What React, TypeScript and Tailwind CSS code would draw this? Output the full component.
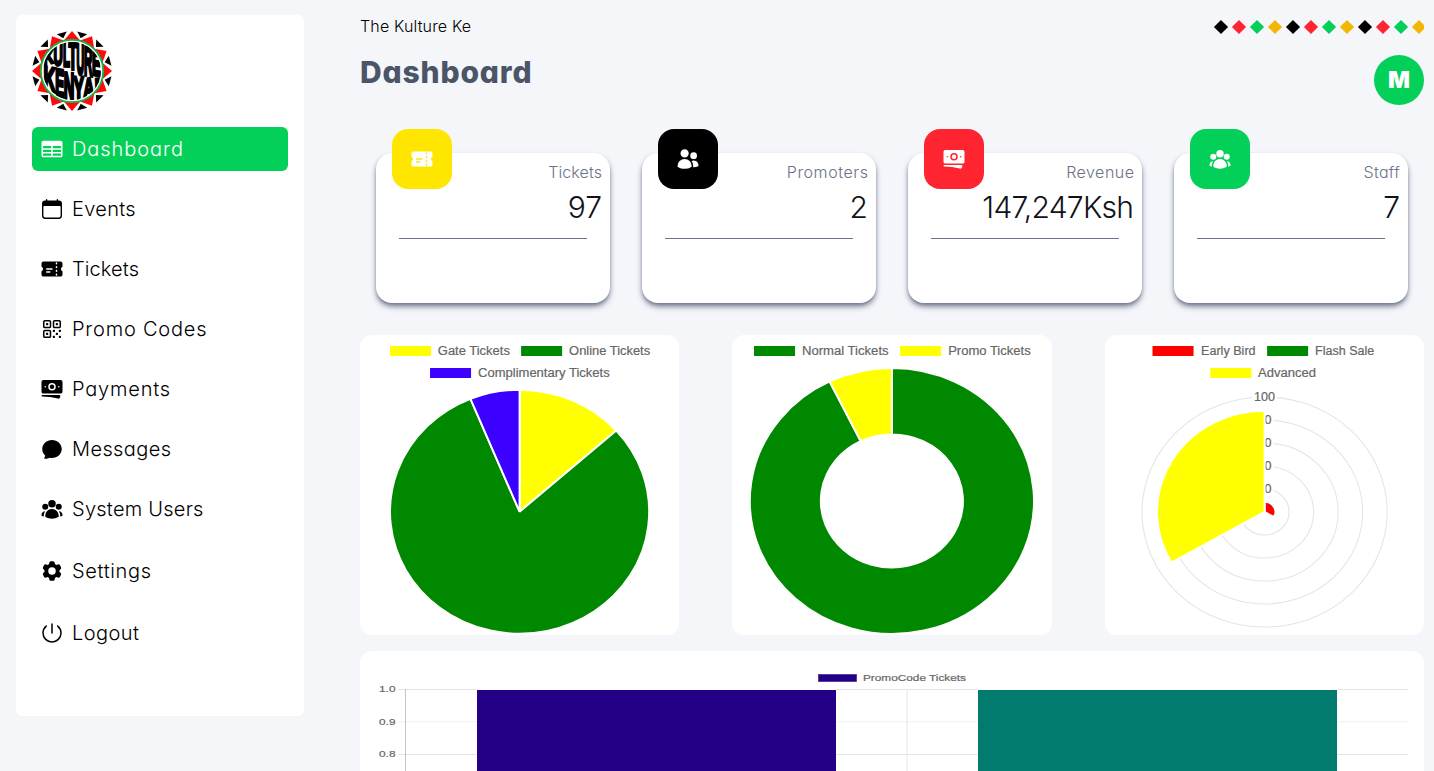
import type { ReactNode } from "react";
import {
  HiTableCells,
  HiTicket,
  HiQrCode,
  HiBanknotes,
  HiUserGroup,
  HiUsers,
  HiCog6Tooth,
  HiChatBubbleOvalLeft,
} from "react-icons/hi2";
import { IoPowerOutline } from "react-icons/io5";

const letters = [
  // glyph, advance, left, right, top, bottom, skew
  ["K", 7.22, 11.5, 22, 19, 33.6, -16],
  ["U", 7.22, 21.6, 31, 12.5, 34.2, -8],
  ["L", 6.11, 31, 38, 10.8, 35.2, 2],
  ["T", 6.11, 36.6, 45.2, 10.6, 38.2, 2],
  ["U", 7.22, 44.4, 52.2, 11.2, 42.8, 6],
  ["R", 7.22, 52, 60.4, 14.4, 44.2, 10],
  ["E", 6.67, 60, 69, 20.5, 44.4, 10],
  ["K", 7.22, 11.5, 23.4, 36, 60, 12],
  ["E", 6.67, 23.2, 32.2, 38.6, 66, 12],
  ["N", 7.22, 31.8, 42.4, 41.8, 69, 6],
  ["Y", 6.67, 41.6, 52, 45.6, 69.2, 0],
  ["A", 7.22, 51.2, 62.2, 47, 66.4, -8],
  ["!", 3.33, 61.8, 69, 47, 60, -8],
] as const;

function Logo() {
  const pt = (r: number, deg: number) => {
    const a = (deg * Math.PI) / 180;
    return `${(40 + r * Math.sin(a)).toFixed(2)},${(40 - r * Math.cos(a)).toFixed(2)}`;
  };
  const steps = Array.from({ length: 12 }, (_, i) => i * 30);
  return (
    <svg viewBox="0 0 80 80" className="block size-20">
      <clipPath id="logo-disc">
        <circle cx="40" cy="40" r="29" />
      </clipPath>
      {steps.map((d) => (
        <g key={d}>
          <polygon points={`${pt(40, d)} ${pt(31.5, d + 15)} ${pt(31.5, d - 15)}`} fill="#ff0a0a" />
          <polygon points={`${pt(33.8, d + 15)} ${pt(39.8, d + 7.5)} ${pt(39.8, d + 22.5)}`} fill="#000" />
        </g>
      ))}
      <circle cx="40" cy="40" r="31.2" fill="#fff" stroke="#12b548" strokeWidth="1.8" />
      <g clipPath="url(#logo-disc)">
        {letters.map(([ch, adv, l, r, t, b, skew], i) => (
          <text
            key={i}
            transform={`translate(${l} ${b}) translate(${(r - l) / 2} 0) skewY(${skew}) translate(${-(r - l) / 2} 0) scale(${(r - l) / adv} ${(b - t) / 7})`}
            fontSize="10"
            fontWeight="700"
            fontFamily="Liberation Sans, sans-serif"
            fill="#000"
            stroke="#000"
            strokeWidth="0.95"
          >
            {ch}
          </text>
        ))}
      </g>
    </svg>
  );
}

function CalendarIcon() {
  return (
    <svg viewBox="0 0 24 24" className="size-6" fill="none" stroke="currentColor" strokeWidth="1.4" strokeLinecap="round">
      <rect x="2.7" y="4.2" width="18.6" height="17" rx="2.4" />
      <path d="M2.6 9.900V6.600a2.400 2.400 0 0 1 2.400-2.400h14a2.400 2.400 0 0 1 2.400 2.400v3.300l-1.200-.9H3.800z" fill="currentColor" stroke="none" />
      <path d="M6.600 2.800v2M17.400 2.800v2" />
    </svg>
  );
}

const nav: { icon: ReactNode; label: string; cls: string; row: string }[] = [
  { icon: <HiTableCells />, label: "Dashboard", cls: "tracking-[0.95px]", row: "mb-4 h-11 rounded-md bg-[#03d058] text-white" },
  { icon: <CalendarIcon />, label: "Events", cls: "tracking-[0.3px]", row: "mb-4 h-11" },
  { icon: <HiTicket />, label: "Tickets", cls: "tracking-[0.1px]", row: "mb-4 h-11" },
  { icon: <HiQrCode />, label: "Promo Codes", cls: "tracking-[0.8px]", row: "mb-4 h-11" },
  { icon: <HiBanknotes />, label: "Payments", cls: "tracking-[0.8px]", row: "mb-4 h-11" },
  { icon: <HiChatBubbleOvalLeft />, label: "Messages", cls: "tracking-[0.4px]", row: "mb-4 h-11" },
  { icon: <HiUserGroup />, label: "System Users", cls: "tracking-[0.25px]", row: "mb-[18px] h-11" },
  { icon: <HiCog6Tooth />, label: "Settings", cls: "tracking-[0.65px]", row: "mb-[18px] h-11" },
  { icon: <IoPowerOutline />, label: "Logout", cls: "tracking-[0.45px]", row: "h-11" },
];

const stats: { icon: ReactNode; label: string; value: string; tile: string; lcls: string; vcls: string }[] = [
  { icon: <HiTicket />, label: "Tickets", value: "97", tile: "bg-[#ffe600]", lcls: "tracking-[0.1px]", vcls: "tracking-normal" },
  { icon: <HiUsers />, label: "Promoters", value: "2", tile: "bg-black", lcls: "-mr-[0.6px] tracking-[0.6px]", vcls: "tracking-normal" },
  { icon: <HiBanknotes />, label: "Revenue", value: "147,247Ksh", tile: "bg-[#ff2530]", lcls: "-mr-[0.5px] tracking-[0.5px]", vcls: "mr-[0.8px] tracking-[-0.75px]" },
  { icon: <HiUserGroup />, label: "Staff", value: "7", tile: "bg-[#03d058]", lcls: "tracking-[0.3px]", vcls: "tracking-normal" },
];

const diamonds = ["bg-black", "bg-[#ff2530]", "bg-[#03d058]", "bg-[#f2b705]"];

function slice(cx: number, cy: number, rx: number, ry: number, from: number, to: number, inner = 0) {
  const p = (k: number, deg: number) => {
    const a = (deg * Math.PI) / 180;
    return `${cx + k * rx * Math.sin(a)} ${cy - k * ry * Math.cos(a)}`;
  };
  const large = to - from > 180 ? 1 : 0;
  const outer = `M${p(1, from)}A${rx} ${ry} 0 ${large} 1 ${p(1, to)}`;
  if (!inner) return `${outer}L${cx} ${cy}Z`;
  return `${outer}L${p(inner, to)}A${rx * inner} ${ry * inner} 0 ${large} 0 ${p(inner, from)}Z`;
}

function Key({ x, y, color, tx, w, label }: { x: number; y: number; color: string; tx: number; w: number; label: string }) {
  return (
    <>
      <rect x={x} y={y - 5} width="41" height="10" fill={color} />
      <text x={tx} y={y + 4} fontSize="12" textLength={w} lengthAdjust="spacingAndGlyphs" fill="#666" stroke="#666" strokeWidth="0.2">
        {label}
      </text>
    </>
  );
}

function ChartCard({ children }: { children: ReactNode }) {
  return (
    <div className="h-[300px] w-[30%] overflow-hidden rounded-xl bg-white">
      <svg viewBox="0 0 319 300" className="block h-full w-full font-['Liberation_Sans',Arial,sans-serif]" preserveAspectRatio="none">
        {children}
      </svg>
    </div>
  );
}

function PieChart() {
  const a = (13 / 97) * 360;
  const b = (91 / 97) * 360;
  return (
    <ChartCard>
      <Key x={30} y={16} color="#ffff00" tx={77.8} w={72} label="Gate Tickets" />
      <Key x={161} y={16} color="#008800" tx={209} w={81} label="Online Tickets" />
      <Key x={70} y={38} color="#3b00ff" tx={118} w={131.5} label="Complimentary Tickets" />
      <g stroke="#fff" strokeWidth="2" strokeLinejoin="bevel">
        <path d={slice(159.5, 176.7, 129.5, 122, 0, a)} fill="#ffff00" />
        <path d={slice(159.5, 176.7, 129.5, 122, a, b)} fill="#008800" />
        <path d={slice(159.5, 176.7, 129.5, 122, b, 360)} fill="#3b00ff" />
      </g>
    </ChartCard>
  );
}

function DoughnutChart() {
  const a = (90 / 97) * 360;
  return (
    <ChartCard>
      <Key x={22} y={16} color="#008800" tx={70} w={86.5} label="Normal Tickets" />
      <Key x={168} y={16} color="#ffff00" tx={216} w={82.5} label="Promo Tickets" />
      <g stroke="#fff" strokeWidth="2">
        <path d={slice(159.8, 166, 142, 133, 0, a, 0.5)} fill="#008800" />
        <path d={slice(159.8, 166, 142, 133, a, 360, 0.5)} fill="#ffff00" />
      </g>
    </ChartCard>
  );
}

function PolarChart() {
  const cx = 159.5;
  const cy = 177;
  const rings = [1, 2, 3, 4, 5];
  return (
    <ChartCard>
      <Key x={47.5} y={16} color="#ff0000" tx={96} w={54.5} label="Early Bird" />
      <Key x={162} y={16} color="#008800" tx={210} w={59} label="Flash Sale" />
      <Key x={105.3} y={38} color="#ffff00" tx={153} w={58} label="Advanced" />
      {rings.map((n) => (
        <ellipse key={n} cx={cx} cy={cy} rx={24.5 * n} ry={23 * n} fill="none" stroke="#e5e5e5" strokeWidth="1.1" />
      ))}
      {rings.map((n) => (
        <g key={n}>
          <rect x={cx - (n === 5 ? 12.5 : 9)} y={cy - 23 * n - 8} width={n === 5 ? 25 : 18} height="16" fill="#fff" />
          <text
            x={cx}
            y={cy - 23 * n + 4}
            textAnchor="middle"
            fontSize="12"
            textLength={n === 5 ? 21 : 14}
            lengthAdjust="spacingAndGlyphs"
            fill="#666"
            stroke="#666"
            strokeWidth="0.2"
          >
            {n * 20}
          </text>
        </g>
      ))}
      <g stroke="#fff" strokeWidth="2" strokeLinejoin="bevel">
        <path d={slice(cx, cy, 10.8, 10.2, 0, 120)} fill="#ff0000" />
        <path d={slice(cx, cy, 107.5, 101.3, 240, 360)} fill="#ffff00" />
      </g>
    </ChartCard>
  );
}

function BarChart() {
  const ticks = [
    { y: 38.5, label: "1.0", c: "#e3e3e3" },
    { y: 70.7, label: "0.9", c: "#f0f0f0" },
    { y: 103.5, label: "0.8", c: "#e3e3e3" },
  ];
  return (
    <div className="h-[340px] shrink-0 overflow-hidden rounded-xl bg-white">
      <svg viewBox="0 0 1064 340" className="block h-full w-full font-['Liberation_Sans',Arial,sans-serif]">
        <rect x="458.5" y="23.5" width="38" height="7" fill="#240087" stroke="#4a2f9c" strokeWidth="0.8" />
        <text x="503" y="30.3" fontSize="9.6" textLength="103" lengthAdjust="spacingAndGlyphs" fill="#666" stroke="#666" strokeWidth="0.2">
          PromoCode Tickets
        </text>
        {ticks.map((t) => (
          <g key={t.label}>
            <line x1="38" x2="1048" y1={t.y} y2={t.y} stroke={t.c} />
            <text x="19" y={t.y + 2.9} fontSize="9.6" textLength="16.5" lengthAdjust="spacingAndGlyphs" fill="#666" stroke="#666" strokeWidth="0.2">
              {t.label}
            </text>
          </g>
        ))}
        <line x1="45.5" x2="45.5" y1="38" y2="340" stroke="#c4c4c4" />
        <line x1="547" x2="547" y1="38" y2="340" stroke="#e5e5e5" />
        <rect x="116.5" y="38" width="360" height="302" fill="#fff" />
        <rect x="117" y="39" width="359" height="301" fill="#240087" />
        <rect x="617.5" y="38" width="360" height="302" fill="#fff" />
        <rect x="618" y="39" width="359" height="301" fill="#007b6e" />
      </svg>
    </div>
  );
}

export default function App() {
  return (
    <div className="flex h-[771px] w-full overflow-hidden bg-[#f4f6fa] font-['Inter',sans-serif] font-light [font-feature-settings:'cv11']">
      <aside className="ml-4 mt-[15px] h-[701px] w-72 shrink-0 rounded-md bg-white px-4 pt-4">
        <Logo />
        <nav className="mt-4 text-black">
          {nav.map((n) => (
            <a key={n.label} className={`flex items-center gap-2 px-2 text-xl ${n.row}`}>
              <span className="text-2xl">{n.icon}</span>
              <span className={`whitespace-nowrap ${n.cls}`}>{n.label}</span>
            </a>
          ))}
        </nav>
      </aside>

      <main className="ml-14 mr-2.5 flex min-w-0 flex-1 flex-col">
        <div className="mt-[15px] flex h-6 shrink-0 items-center justify-between">
          <span className="-mt-0.5 text-base tracking-[0.15px] text-black">The Kulture Ke</span>
          <div className="flex w-[212px] gap-2 overflow-hidden py-1 pl-1">
            {Array.from({ length: 12 }, (_, i) => (
              <span key={i} className={`size-2.5 shrink-0 rotate-45 ${diamonds[i % 4]}`} />
            ))}
          </div>
        </div>
        <header className="mt-4 flex h-[50px] shrink-0 justify-between">
          <h1 className="-mt-px text-[30px] leading-9 font-extrabold tracking-[0.85px] text-[#4a5568]">Dashboard</h1>
          <div className="flex size-[50px] items-center justify-center rounded-full bg-[#03d058] text-[23px] font-black text-white">M</div>
        </header>

        <section className="mx-4 mt-12 grid shrink-0 grid-cols-4 gap-8">
          {stats.map((s) => (
            <div key={s.label} className="relative h-[150px] rounded-2xl bg-white shadow-md shadow-[#6b7289]">
              <div className={`absolute -top-6 left-4 flex size-[60px] items-center justify-center rounded-2xl text-2xl text-white ${s.tile}`}>{s.icon}</div>
              <div className="pr-2 pt-[7px] text-right">
                <p className={`text-base leading-6 text-[#6b7289] ${s.lcls}`}>{s.label}</p>
                <p className={`mt-[5px] text-[30px] leading-9 text-[#111118] ${s.vcls}`}>{s.value}</p>
              </div>
              <hr className="mx-auto mt-[13px] w-4/5 border-[#6b7289]" />
            </div>
          ))}
        </section>

        <section className="mt-8 mb-4 flex shrink-0 justify-between">
          <PieChart />
          <DoughnutChart />
          <PolarChart />
        </section>
        <BarChart />
      </main>
    </div>
  );
}
